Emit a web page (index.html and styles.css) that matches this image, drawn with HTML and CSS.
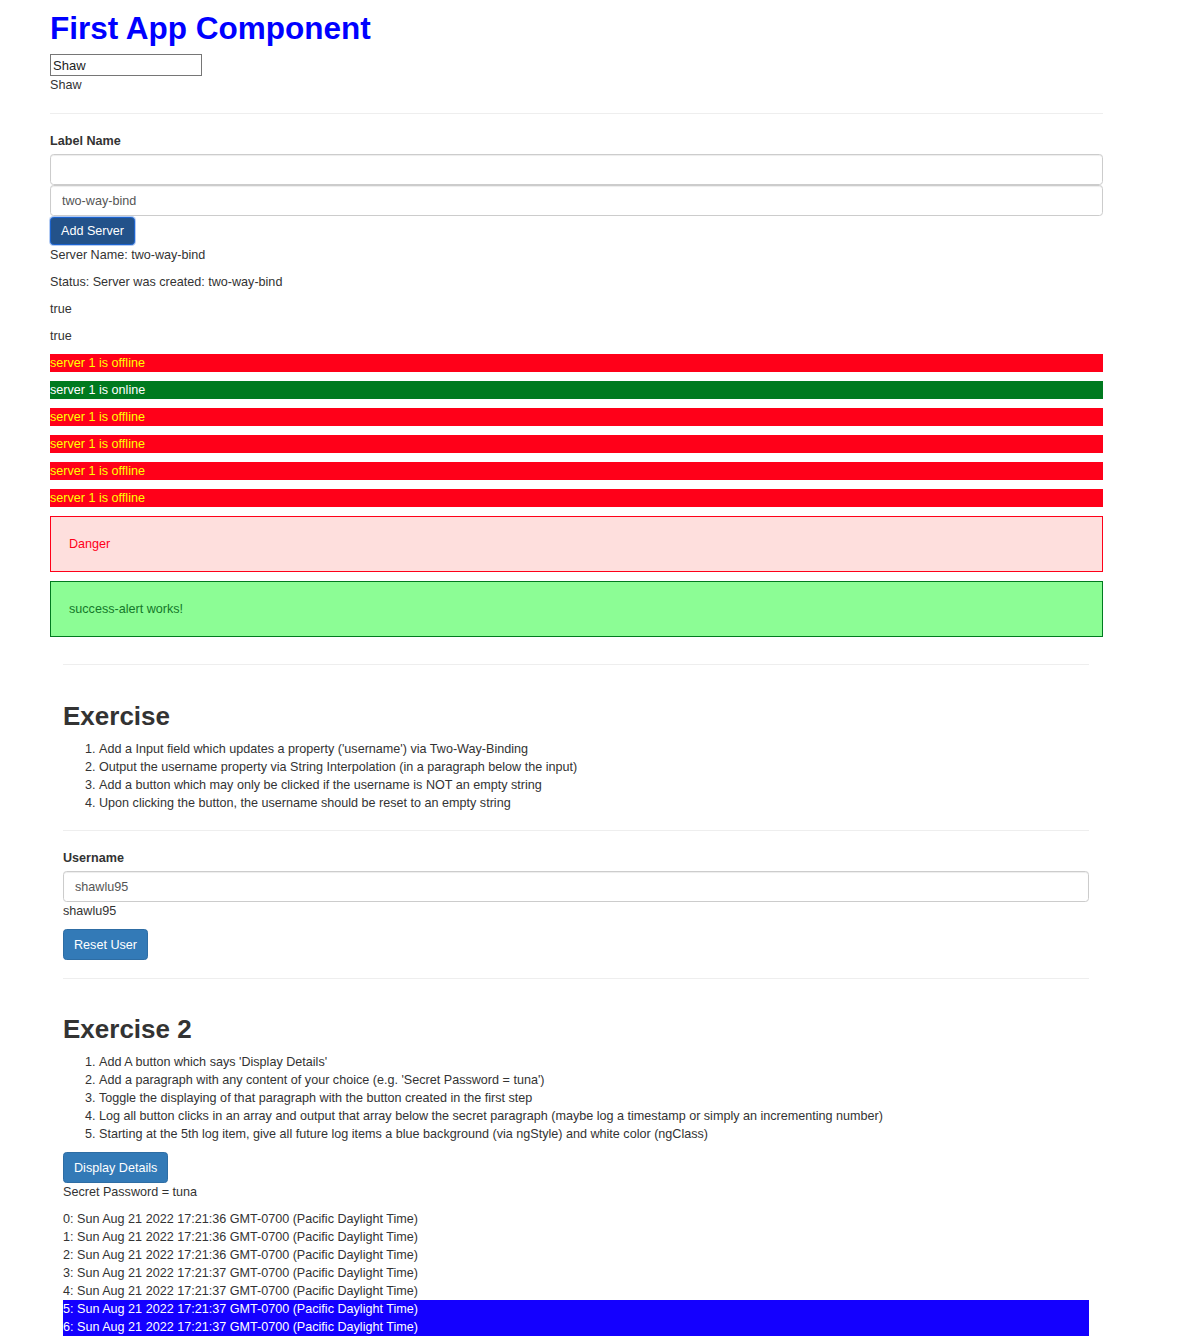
FILE: index.html
```html
<!DOCTYPE html>
<html>
<head>
<meta charset="utf-8">
<link rel="stylesheet" href="styles.css">
</head>
<body>
<div class="page">
  <section class="first">
    <h1 class="title">First App Component</h1>
    <input class="plain-input" type="text" value="Shaw">
    <p class="line">Shaw</p>
    <hr class="rule rule-top">
    <label class="label">Label Name</label>
    <input class="form-control" type="text" value="">
    <input class="form-control" type="text" value="two-way-bind">
    <button class="btn btn-active">Add Server</button>
    <p class="para">Server Name: two-way-bind</p>
    <p class="para">Status: Server was created: two-way-bind</p>
    <p class="para">true</p>
    <p class="para">true</p>
    <p class="para bar bar-off">server 1 is offline</p>
    <p class="para bar bar-on">server 1 is online</p>
    <p class="para bar bar-off">server 1 is offline</p>
    <p class="para bar bar-off">server 1 is offline</p>
    <p class="para bar bar-off">server 1 is offline</p>
    <p class="para bar bar-off">server 1 is offline</p>
    <div class="alert alert-danger">Danger</div>
    <div class="alert alert-success">success-alert works!</div>
  </section>
  <section class="exercises">
    <hr class="rule rule-ex1">
    <h2 class="heading">Exercise</h2>
    <ol class="steps">
      <li>Add a Input field which updates a property ('username') via Two-Way-Binding</li>
      <li>Output the username property via String Interpolation (in a paragraph below the input)</li>
      <li>Add a button which may only be clicked if the username is NOT an empty string</li>
      <li>Upon clicking the button, the username should be reset to an empty string</li>
    </ol>
    <hr class="rule rule-mid">
    <label class="label">Username</label>
    <input class="form-control" type="text" value="shawlu95">
    <p class="line">shawlu95</p>
    <button class="btn btn-primary btn-reset">Reset User</button>
    <hr class="rule rule-ex2">
    <h2 class="heading">Exercise 2</h2>
    <ol class="steps">
      <li>Add A button which says 'Display Details'</li>
      <li>Add a paragraph with any content of your choice (e.g. 'Secret Password = tuna')</li>
      <li>Toggle the displaying of that paragraph with the button created in the first step</li>
      <li>Log all button clicks in an array and output that array below the secret paragraph (maybe log a timestamp or simply an incrementing number)</li>
      <li>Starting at the 5th log item, give all future log items a blue background (via ngStyle) and white color (ngClass)</li>
    </ol>
    <button class="btn btn-primary btn-details">Display Details</button>
    <p class="line">Secret Password = tuna</p>
    <div class="log">
      <div class="log-row">0: Sun Aug 21 2022 17:21:36 GMT-0700 (Pacific Daylight Time)</div>
      <div class="log-row">1: Sun Aug 21 2022 17:21:36 GMT-0700 (Pacific Daylight Time)</div>
      <div class="log-row">2: Sun Aug 21 2022 17:21:36 GMT-0700 (Pacific Daylight Time)</div>
      <div class="log-row">3: Sun Aug 21 2022 17:21:37 GMT-0700 (Pacific Daylight Time)</div>
      <div class="log-row">4: Sun Aug 21 2022 17:21:37 GMT-0700 (Pacific Daylight Time)</div>
      <div class="log-row log-blue">5: Sun Aug 21 2022 17:21:37 GMT-0700 (Pacific Daylight Time)</div>
      <div class="log-row log-blue">6: Sun Aug 21 2022 17:21:37 GMT-0700 (Pacific Daylight Time)</div>
    </div>
  </section>
</div>
</body>
</html>
```
FILE: styles.css
```css
* { box-sizing: border-box; }
html, body { margin: 0; padding: 0; background: #fff; }
body {
  font-family: "Liberation Sans", Arial, Helvetica, sans-serif;
  font-size: 12.6px;
  line-height: 18px;
  color: #333;
}
.page {
  margin-left: 50px;
  width: 1053px;
  padding-top: 11px;
}
.title {
  margin: 0;
  font-size: 31.5px;
  line-height: 35px;
  font-weight: bold;
  color: #0000ff;
}
.plain-input {
  display: block;
  margin-top: 8px;
  width: 152px;
  height: 22px;
  border: 1px solid #767676;
  padding: 0 2px;
  font-family: "Liberation Sans", Arial, sans-serif;
  font-size: 13px;
  color: #222;
  background: #fff;
}
.line { margin: 0; }
.para { margin: 0 0 9px 0; }
.rule {
  border: 0;
  border-top: 1px solid #eee;
  height: 0;
  margin: 0;
}
.rule-top { margin-top: 19px; margin-bottom: 18px; }
.label {
  display: block;
  font-weight: bold;
  margin-bottom: 4px;
}
.form-control {
  display: block;
  width: 100%;
  height: 31px;
  padding: 0 11px;
  border: 1px solid #ccc;
  border-radius: 3.6px;
  box-shadow: inset 0 1px 1px rgba(0,0,0,0.075);
  font-family: "Liberation Sans", Arial, sans-serif;
  font-size: 12.6px;
  color: #555;
  background: #fff;
}
.btn {
  display: block;
  font-family: "Liberation Sans", Arial, sans-serif;
  font-size: 12.6px;
  line-height: 18px;
  color: #fff;
  border-radius: 3.6px;
  padding: 6px 10px;
  cursor: pointer;
}
.btn-active {
  margin-top: 1px;
  margin-bottom: 1px;
  height: 28px;
  padding: 4px 10px;
  background: #23528a;
  border: 1px solid #1b63cf;
  box-shadow: 0 0 0 1px rgba(40,110,220,0.35);
}
.btn-primary {
  background: #337ab7;
  border: 1px solid #2e6da4;
  height: 31px;
}
.bar { padding: 0; }
.bar-off { background: #ff0019; color: #ffff00; }
.bar-on { background: #007a1f; color: #fff; }
.alert {
  height: 56px;
  padding: 18px 18px;
  margin-bottom: 9px;
  border: 1px solid;
}
.alert-danger {
  background: #fedfdd;
  border-color: #ff0019;
  color: #ff0019;
}
.alert-success {
  background: #8cfd95;
  border-color: #007a1f;
  color: #14782a;
  margin-bottom: 0;
}
.exercises {
  padding: 0 14px 0 13px;
}
.rule-ex1 { margin-top: 27px; margin-bottom: 36px; }
.heading {
  margin: 0 0 9px 0;
  font-size: 26px;
  line-height: 30px;
  font-weight: bold;
}
.steps {
  margin: 0;
  padding-left: 36px;
}
.rule-mid { margin-top: 18px; margin-bottom: 18px; }
.btn-reset { margin-top: 9px; }
.rule-ex2 { margin-top: 18px; margin-bottom: 35px; }
.btn-details { margin-top: 9px; }
.log { margin-top: 9px; }
.log-row { line-height: 18px; }
.log-blue { background: #1400ff; color: #fff; }
```
